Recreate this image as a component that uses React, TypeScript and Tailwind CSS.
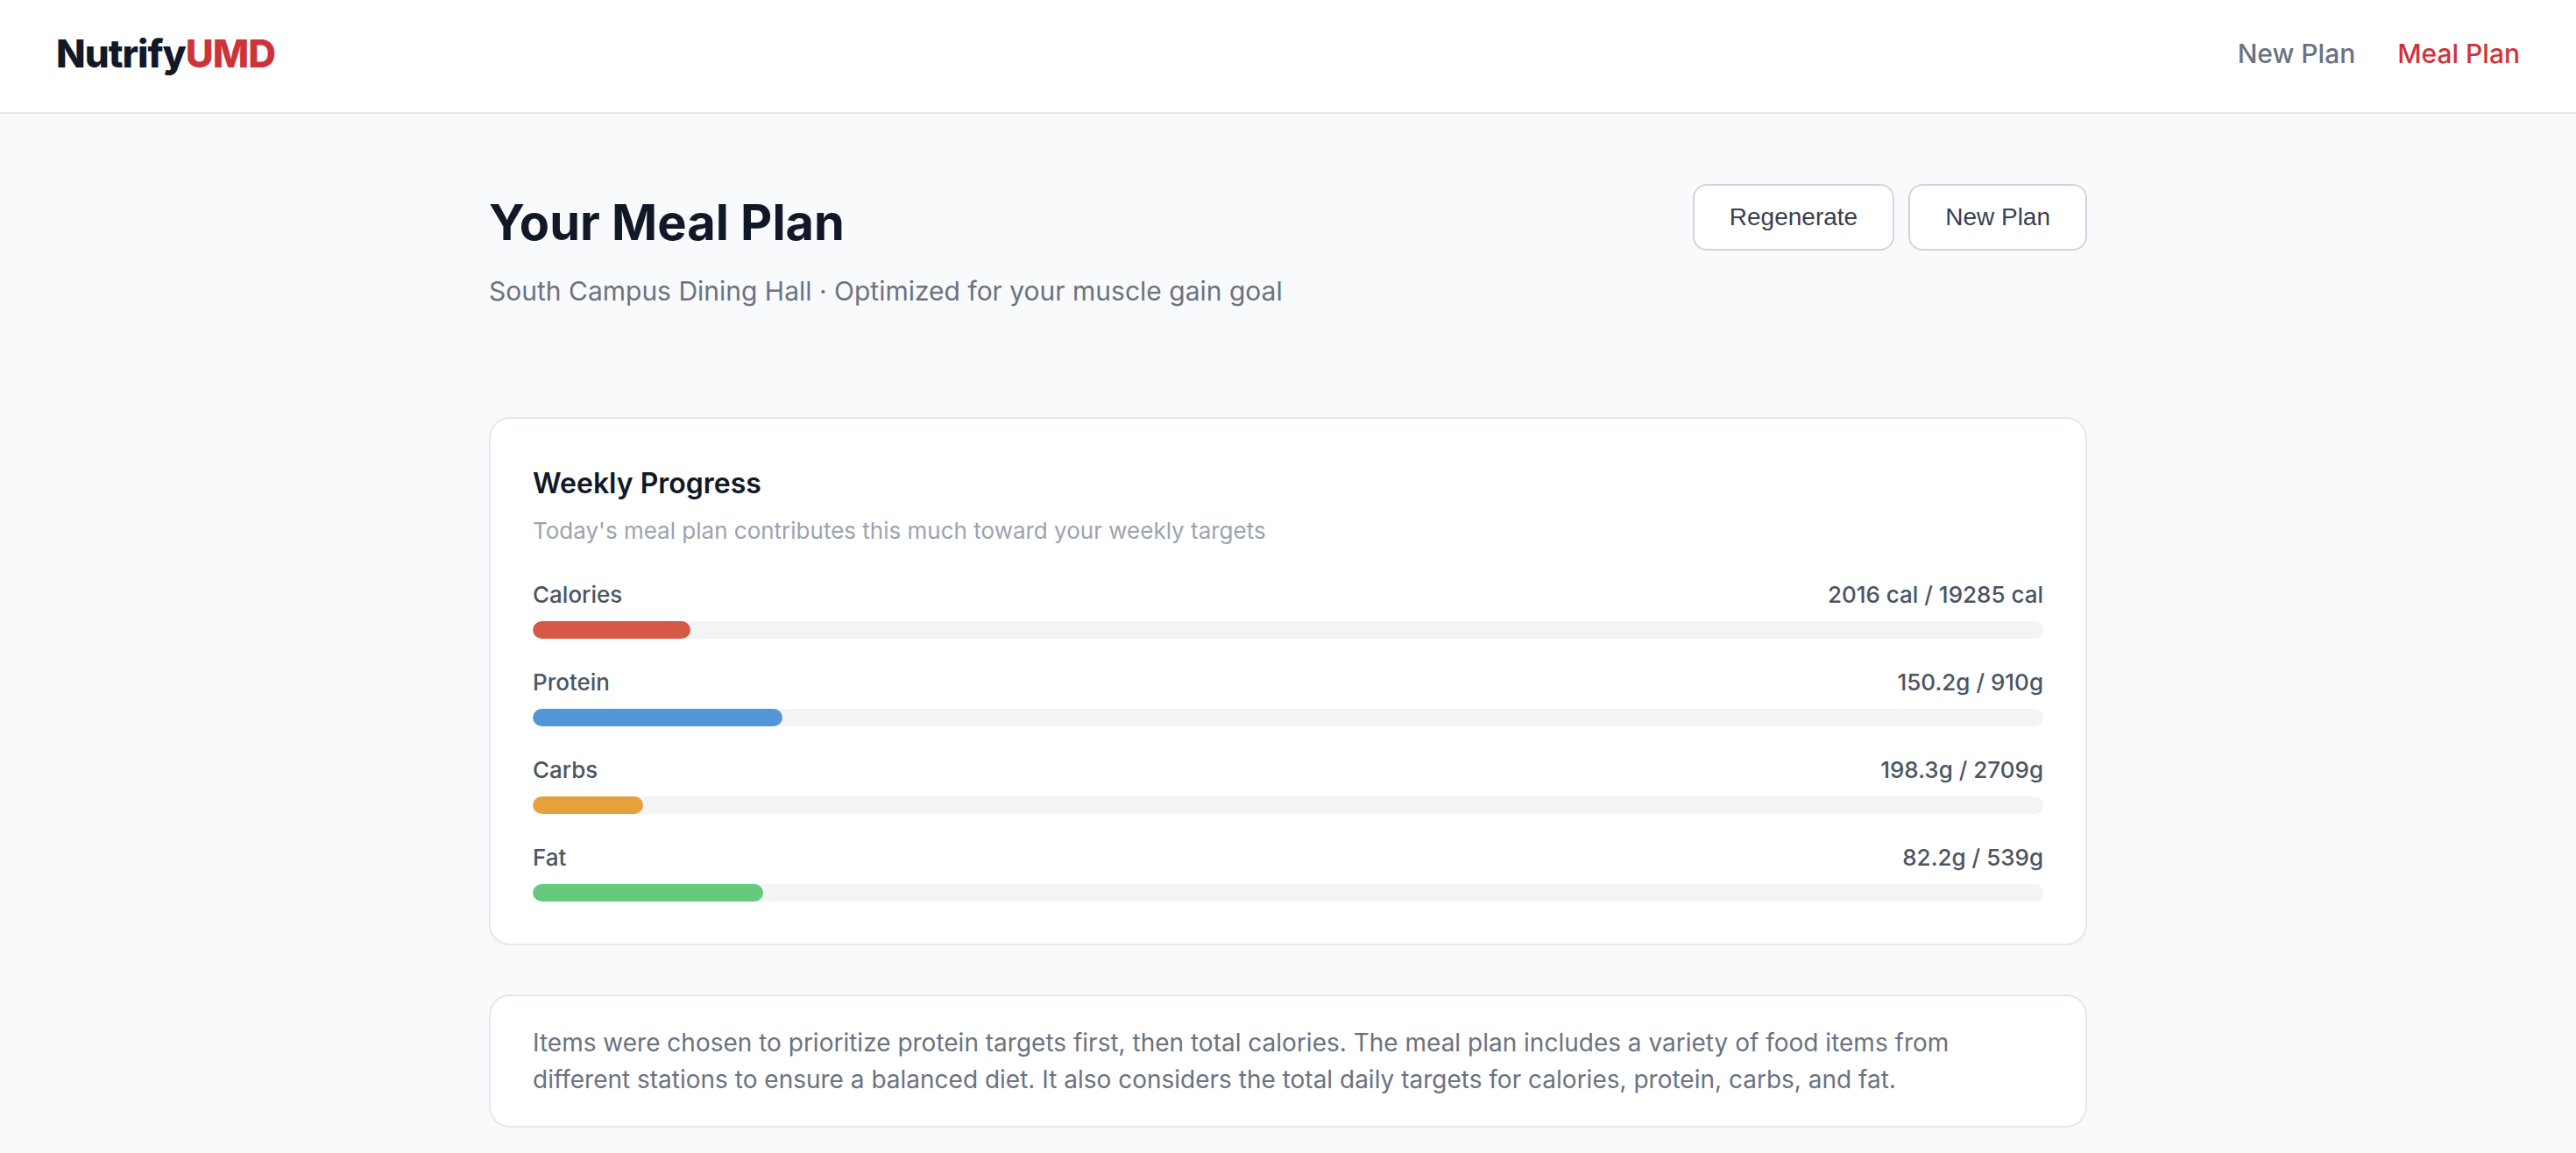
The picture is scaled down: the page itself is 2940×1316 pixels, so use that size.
const bars = [
  { label: 'Calories', value: '2016 cal / 19285 cal', pct: 10.45, color: 'bg-[#d65847]' },
  { label: 'Protein', value: '150.2g / 910g', pct: 16.53, color: 'bg-[#5396d7]' },
  { label: 'Carbs', value: '198.3g / 2709g', pct: 7.32, color: 'bg-[#e8a03c]' },
  { label: 'Fat', value: '82.2g / 539g', pct: 15.25, color: 'bg-[#66c97c]' },
];

export default function App() {
  return (
    <div className="min-h-screen bg-[#f9fafc] font-['Inter',sans-serif] text-[#111827]">
      <header className="flex h-[130px] items-center justify-between border-b-2 border-[#e5e7eb] bg-white px-16 pb-1.5">
        <a href="#" className="text-[44px] leading-[60px] font-extrabold tracking-[-1px]">
          Nutrify<span className="text-[#cf333a]">UMD</span>
        </a>
        <nav className="flex gap-12 text-[30px] leading-[48px] font-medium">
          <a href="#" className="text-[#6b7280]">New Plan</a>
          <a href="#" className="text-[#cf333a]">Meal Plan</a>
        </nav>
      </header>
      <main className="mx-auto max-w-[1824px] pt-20">
        <div className="mb-[120px] flex items-start justify-between">
          <div>
            <h1 className="text-[56px] leading-[88px] font-bold">Your Meal Plan</h1>
            <p className="mt-2.5 text-[30px] leading-[48px] text-[#6b7280]">
              South Campus Dining Hall · Optimized for your muscle gain goal
            </p>
          </div>
          <div className="flex gap-4 font-['Liberation_Sans',sans-serif] text-[28px] text-[#374151]">
            <button className="h-[76px] rounded-2xl border-2 border-[#d1d5db] bg-white px-10">Regenerate</button>
            <button className="h-[76px] rounded-2xl border-2 border-[#d1d5db] bg-white px-10">New Plan</button>
          </div>
        </div>
        <section className="mb-14 rounded-3xl border-2 border-[#e5e7eb] bg-white p-12">
          <h2 className="text-[32px] leading-[52px] font-semibold">Weekly Progress</h2>
          <p className="mt-2 text-[26px] leading-[40px] text-[#9ca3af]">
            Today's meal plan contributes this much toward your weekly targets
          </p>
          <div className="mt-[33px] flex flex-col gap-[30px]">
            {bars.map((b) => (
              <div key={b.label}>
                <div className="mb-2.5 flex justify-between text-[26px] leading-[40px] font-medium text-[#4b5563]">
                  <span>{b.label}</span>
                  <span>{b.value}</span>
                </div>
                <div className="h-5 overflow-hidden rounded-full bg-[#f3f4f6]">
                  <div className={`h-full rounded-full ${b.color}`} style={{ width: `${b.pct}%` }} />
                </div>
              </div>
            ))}
          </div>
        </section>
        <section className="rounded-3xl border-2 border-[#e5e7eb] bg-white px-12 py-8">
          <p className="text-[28px] leading-[42px] text-[#6b7280]">
            Items were chosen to prioritize protein targets first, then total calories. The meal plan includes a variety of food items from different stations to ensure a balanced diet. It also considers the total daily targets for calories, protein, carbs, and fat.
          </p>
        </section>
      </main>
    </div>
  );
}
